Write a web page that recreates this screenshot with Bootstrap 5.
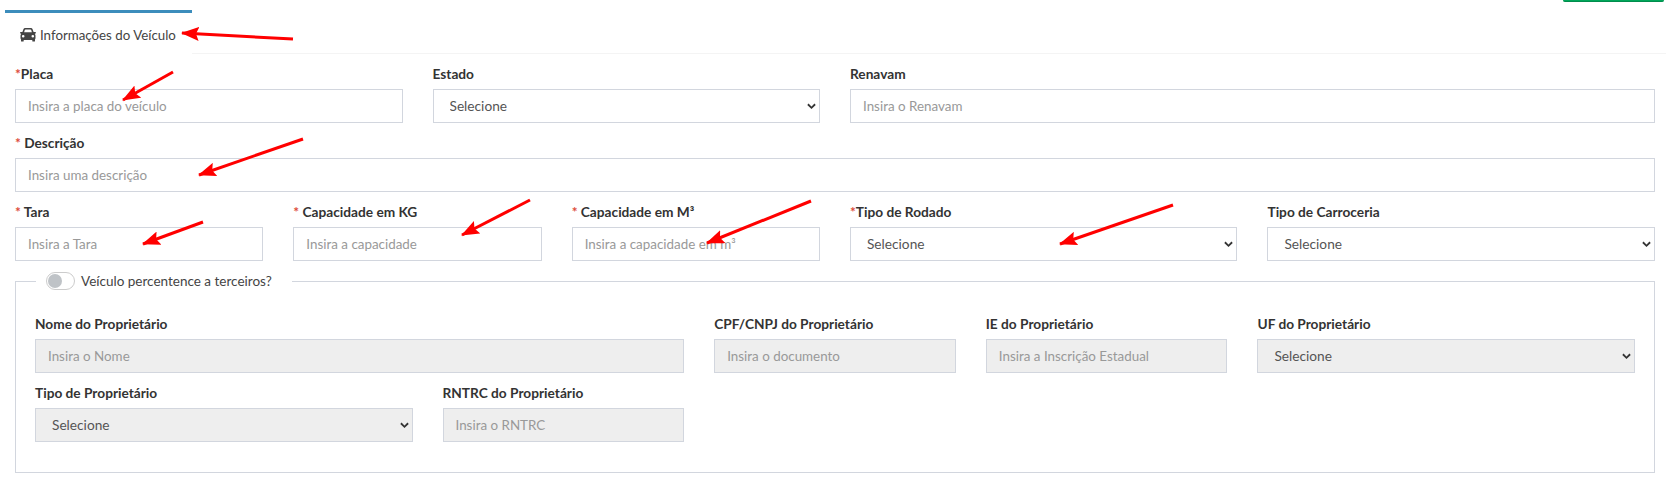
<!DOCTYPE html>
<html lang="pt-BR">
<head>
  <meta charset="UTF-8">
  <title>Informações do Veículo</title>
  <meta name="viewport" content="width=device-width, initial-scale=1">
  <link href="https://cdn.jsdelivr.net/npm/bootstrap@5.3.3/dist/css/bootstrap.min.css" rel="stylesheet">
  <style>
    html, body {
      overflow: hidden;
    }

    body {
      font-family: 'Lato', sans-serif;
      font-size: 13px;
      color: #333;
      background: #fff;
    }

    .page-wrap {
      width: 1670px;
      position: relative;
    }

    .top-edge {
      width: 1666px;
    }

    .save-edge {
      width: 101px;
      height: 2px;
      margin-right: 2px;
      background: #00a65a;
      border-bottom: 1px solid #008d4c;
      border-radius: 0 0 2px 2px;
    }

    .tab-strip {
      margin-top: 8px;
      height: 44px;
    }

    .tab-active {
      width: 187px;
      margin-left: 5px;
      border-top: 3px solid #3c8dbc;
      padding: 12px 0 0 15px;
      color: #444;
      font-size: 13.3px;
      line-height: 20px;
    }

    .tab-rest {
      border-bottom: 1px solid #f4f4f4;
    }

    .tab-active svg {
      width: 16px;
      height: 14px;
      margin-right: 4px;
      vertical-align: -2px;
      fill: #444;
    }

    .form-grid {
      --bs-gutter-x: 30px;
      --bs-gutter-y: 0;
      margin-left: 0;
      margin-right: 0;
    }

    .form-grid-top {
      padding-top: 11px;
    }

    .field-label {
      display: block;
      font-weight: 700;
      font-size: 13.7px;
      line-height: 17px;
      margin-bottom: 5px;
      height: 19px;
      color: #333;
      white-space: nowrap;
    }

    .req {
      color: #dd4b39;
      font-weight: 700;
    }

    .form-control.field-input,
    .form-select.field-input {
      height: 34px;
      min-height: 34px;
      border: 1px solid #d2d6de;
      border-radius: 0;
      font-size: 13.4px;
      padding: 6px 12px;
      color: #555;
      box-shadow: none;
    }

    .form-select.field-input {
      padding-left: 16px;
      font-size: 13.7px;
      background-image: url("data:image/svg+xml,%3csvg xmlns='http://www.w3.org/2000/svg' viewBox='0 0 10 7'%3e%3cpath fill='none' stroke='%23333' stroke-width='2' d='M1 1l4 4 4-4'/%3e%3c/svg%3e");
      background-position: right 3px center;
      background-size: 9px 7px;
    }

    .field-input::placeholder {
      color: #999;
      opacity: 1;
    }

    .form-control.field-input:disabled,
    .form-select.field-input:disabled {
      background-color: #eee;
      opacity: 1;
    }

    .field-block {
      margin-bottom: 11px;
    }

    .owner-box {
      margin: -1px 15px 0;
      width: 1640px;
      height: 202px;
      border: 1px solid #d2d6de;
      padding: 0 4px;
    }

    .owner-legend {
      float: none;
      width: auto;
      margin: 0 0 0 16px;
      padding: 0 20px 0 10px;
      font-size: 13.5px;
      line-height: 20px;
      display: flex;
      align-items: center;
      gap: 6px;
      color: #444;
    }

    .toggle-track {
      width: 29px;
      height: 18px;
      border: 1px solid #ccc;
      border-radius: 9px;
      background: #fff;
      padding: 1px;
    }

    .toggle-track span {
      display: block;
      width: 14px;
      height: 14px;
      border-radius: 50%;
      background: #bfc3c7;
    }

    .owner-grid {
      padding-top: 24px;
    }

    .arrow-layer {
      position: absolute;
      left: 0;
      top: 0;
      width: 1666px;
      height: 485px;
      pointer-events: none;
    }

    .arrow-layer line {
      stroke: #f00;
      stroke-width: 3;
    }
  </style>
</head>
<body>
<div class="page-wrap">
  <div class="top-edge d-flex justify-content-end">
    <div class="save-edge"></div>
  </div>

  <div class="tab-strip d-flex">
    <div class="tab-active">
      <svg viewBox="0 0 16 14"><path fill-rule="evenodd" d="M3.400 1.200Q3.800 0 5.200 0H10.800Q12.200 0 12.600 1.200L13.600 4H15.600Q16 4 15.900 4.400L15.700 5.300Q15.600 5.700 15.200 5.700H14.800Q15.500 6.500 15.500 7.600V10Q15.500 10.900 15 11.400V13Q15 13.600 14.400 13.600H12.900Q12.300 13.600 12.300 13V12H3.700V13Q3.700 13.600 3.100 13.600H1.600Q1 13.600 1 13V11.400Q.5 10.900 .5 10V7.600Q.5 6.500 1.200 5.700H.8Q.4 5.700 .3 5.300L.1 4.400Q0 4 .4 4H2.400ZM4.800 2Q5 1.500 5.500 1.500H10.500Q11 1.500 11.200 2L11.900 4.300H4.100ZM3.200 6.900A1.300 1.300 0 1 0 3.200 9.500A1.300 1.300 0 1 0 3.200 6.900ZM12.800 6.900A1.300 1.300 0 1 0 12.800 9.500A1.300 1.300 0 1 0 12.800 6.900Z"/></svg>Informações do Veículo
    </div>
    <div class="tab-rest flex-grow-1"></div>
  </div>

  <div class="row form-grid form-grid-top">
    <div class="col-3 field-block">
      <label class="field-label"><span class="req">*</span>Placa</label>
      <input class="form-control field-input" placeholder="Insira a placa do veículo">
    </div>
    <div class="col-3 field-block">
      <label class="field-label">Estado</label>
      <select class="form-select field-input"><option>Selecione</option></select>
    </div>
    <div class="col-6 field-block">
      <label class="field-label">Renavam</label>
      <input class="form-control field-input" placeholder="Insira o Renavam">
    </div>
    <div class="col-12 field-block">
      <label class="field-label"><span class="req">*</span> Descrição</label>
      <input class="form-control field-input" placeholder="Insira uma descrição">
    </div>
    <div class="col-2 field-block">
      <label class="field-label"><span class="req">*</span> Tara</label>
      <input class="form-control field-input" placeholder="Insira a Tara">
    </div>
    <div class="col-2 field-block">
      <label class="field-label"><span class="req">*</span> Capacidade em KG</label>
      <input class="form-control field-input" placeholder="Insira a capacidade">
    </div>
    <div class="col-2 field-block">
      <label class="field-label"><span class="req">*</span> Capacidade em M³</label>
      <input class="form-control field-input" placeholder="Insira a capacidade em m³">
    </div>
    <div class="col-3 field-block">
      <label class="field-label"><span class="req">*</span>Tipo de Rodado</label>
      <select class="form-select field-input"><option>Selecione</option></select>
    </div>
    <div class="col-3 field-block">
      <label class="field-label">Tipo de Carroceria</label>
      <select class="form-select field-input"><option>Selecione</option></select>
    </div>
  </div>

  <fieldset class="owner-box">
    <legend class="owner-legend">
      <span class="toggle-track"><span></span></span>
      Veículo percentence a terceiros?
    </legend>
    <div class="row form-grid owner-grid">
      <div class="col-5 field-block">
        <label class="field-label">Nome do Proprietário</label>
        <input class="form-control field-input" placeholder="Insira o Nome" disabled>
      </div>
      <div class="col-2 field-block">
        <label class="field-label">CPF/CNPJ do Proprietário</label>
        <input class="form-control field-input" placeholder="Insira o documento" disabled>
      </div>
      <div class="col-2 field-block">
        <label class="field-label">IE do Proprietário</label>
        <input class="form-control field-input" placeholder="Insira a Inscrição Estadual" disabled>
      </div>
      <div class="col-3 field-block">
        <label class="field-label">UF do Proprietário</label>
        <select class="form-select field-input" disabled><option>Selecione</option></select>
      </div>
      <div class="col-3 field-block">
        <label class="field-label">Tipo de Proprietário</label>
        <select class="form-select field-input" disabled><option>Selecione</option></select>
      </div>
      <div class="col-2 field-block">
        <label class="field-label">RNTRC do Proprietário</label>
        <input class="form-control field-input" placeholder="Insira o RNTRC" disabled>
      </div>
    </div>
  </fieldset>

  <svg class="arrow-layer" viewBox="0 0 1666 485">
    <defs>
      <marker id="arrowHead" markerUnits="userSpaceOnUse" markerWidth="18" markerHeight="14" refX="17" refY="7" orient="auto">
        <path d="M0 0 L18 7 L0 14 L3 7 Z" fill="#f00"/>
      </marker>
    </defs>
    <line x1="293" y1="39" x2="182" y2="33" marker-end="url(#arrowHead)"/>
    <line x1="173" y1="72" x2="123" y2="100" marker-end="url(#arrowHead)"/>
    <line x1="303" y1="139" x2="199" y2="175" marker-end="url(#arrowHead)"/>
    <line x1="203" y1="222" x2="143" y2="244" marker-end="url(#arrowHead)"/>
    <line x1="530" y1="200" x2="462" y2="235" marker-end="url(#arrowHead)"/>
    <line x1="811" y1="201" x2="707" y2="243" marker-end="url(#arrowHead)"/>
    <line x1="1173" y1="205" x2="1060" y2="244" marker-end="url(#arrowHead)"/>
  </svg>
</div>
</body>
</html>
